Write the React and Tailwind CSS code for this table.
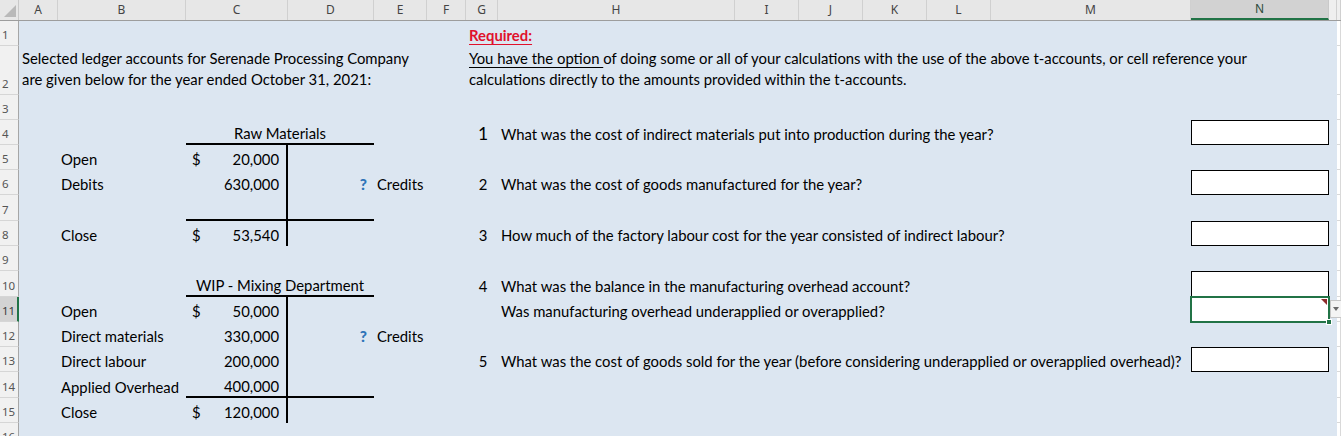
import React from "react";

const GRID =
  "grid grid-cols-[19px_39px_128px_102px_86px_53px_39px_32px_237px_64px_64px_64px_64px_200px_138px_8px_1fr]";

const COLS = ["A", "B", "C", "D", "E", "F", "G", "H", "I", "J", "K", "L", "M", "N", "O", "P"];

const Amount = ({ dollar, v }) => (
  <div className="flex w-full justify-between pl-[6px] pr-[7px]">
    <span>{dollar ? "$" : ""}</span>
    <span>{v}</span>
  </div>
);

const Num = ({ n, big }) => (
  <div className={`w-full pl-[2px] text-center ${big ? "text-[17.5px] leading-[19px]" : ""}`}>{n}</div>
);

const Box = () => <div className="absolute inset-0 border border-black bg-white" />;

const SelectedBox = () => (
  <>
    <div className="absolute inset-0 border border-black bg-white" />
    <div className="absolute -inset-[1px] z-10 border-2 border-[#217346]" />
    <svg className="absolute right-[2px] top-[2px] z-10" width="6" height="6" viewBox="0 0 6 6">
      <polygon points="0,0 6,0 6,6" fill="#8e2b2b" />
    </svg>
    <div className="absolute -bottom-[3px] -right-[3px] z-20 h-[6px] w-[6px] border border-white bg-[#217346]" />
    <div className="absolute left-[calc(100%+1px)] top-[3px] z-20 flex h-[18px] w-[12px] items-center justify-center border border-[#c6c6c6] bg-[#f4f4f4]">
      <svg width="6" height="4" viewBox="0 0 6 4">
        <polygon points="0,0 6,0 3,4" fill="#6a6a6a" />
      </svg>
    </div>
  </>
);

const Credits = {
  v: <div className="w-full pr-[7px] text-right text-[15.5px] font-black text-[#2e74b8]">?</div>,
};

function Row({ h, n, sel, cells = {} }) {
  const out = [];
  for (let i = 0; i < COLS.length; i++) {
    const key = COLS[i];
    const c = cells[key] || {};
    if (key === "P") {
      out.push(<div key={key} className="border-b border-r border-[#d9d9d9] bg-white" />);
      continue;
    }
    out.push(
      <div
        key={key}
        className={`relative flex min-w-0 items-end whitespace-nowrap ${c.cls || "pb-[2px]"} ${c.span || ""}`}
      >
        {c.v}
      </div>
    );
    if (c.skip) i += c.skip;
  }
  return (
    <div className={`${GRID} ${h} bg-[#dce6f1]`}>
      <div
        className={`flex items-end pb-[3px] pl-[2px] text-[11.5px] leading-[14px] ${
          sel
            ? "border-r-2 border-r-[#217346] bg-[#d3d3d3] text-[#3a3a3a]"
            : "border-r border-r-[#a6a6a6] bg-[#f1f1f1] text-[#555]"
        } border-b border-b-[#d6d6d6] font-['Noto_Sans',sans-serif]`}
      >
        {n}
      </div>
      {out}
    </div>
  );
}

function Header() {
  const letters = ["A", "B", "C", "D", "E", "F", "G", "H", "I", "J", "K", "L", "M", "N", "O", ""];
  return (
    <div className={`${GRID} h-[21px] border-b border-[#9d9d9d] bg-[#e7e7e7] font-['Noto_Sans',sans-serif] text-[12px] text-[#444]`}>
      <div className="relative border-r border-[#c9c9c9]">
        <svg className="absolute left-[4px] top-[5px]" width="12" height="12" viewBox="0 0 12 12">
          <polygon points="12,0 12,12 0,12" fill="#b9b9b9" />
        </svg>
      </div>
      {letters.map((l, i) =>
        l === "N" ? (
          <div key={i} className="flex items-center justify-center border-b-2 border-r border-b-[#217346] border-r-[#c9c9c9] bg-[#d2d2d2] text-[#2e4a3a]">
            {l}
          </div>
        ) : (
          <div key={i} className={`flex items-center justify-center border-r border-[#d0d0d0] ${l === "" || l === "O" ? "bg-[#efefef]" : ""}`}>
            {l === "O" ? "" : l}
          </div>
        )
      )}
    </div>
  );
}

export default function App() {
  return (
    <div className="h-[436px] w-[1341px] overflow-hidden bg-white font-['Lato',sans-serif] text-[14.85px] leading-[18px] text-black">
      <Header />
      <Row
        h="h-[25px]"
        n="1"
        cells={{
          G: { v: <span className="pl-[3px] font-bold text-[#e0112b] underline underline-offset-[3px]">Required:</span> },
        }}
      />
      <Row
        h="h-[49px]"
        n="2"
        cells={{
          A: {
            cls: "items-start pt-[2px] leading-[21px]",
            v: (
              <div className="pl-[3px]">
                Selected ledger accounts for Serenade Processing Company
                <br />
                are given below for the year ended October 31, 2021:
              </div>
            ),
          },
          G: {
            cls: "items-start pt-[2px] leading-[21px]",
            v: (
              <div className="pl-[3px]">
                <span className="underline underline-offset-[3px]">You have the option </span>of doing some or all of
                your calculations with the use of the above t-accounts, or cell reference your
                <br />
                calculations directly to the amounts provided within the t-accounts.
              </div>
            ),
          },
        }}
      />
      <Row h="h-[25px]" n="3" />
      <Row
        h="h-[25px]"
        n="4"
        cells={{
          C: { span: "col-span-2", skip: 1, cls: "pb-[1px] justify-center border-b-2 border-black", v: "Raw Materials" },
          G: { v: <Num n="1" big /> },
          H: { v: <span className="pl-[3px]">What was the cost of indirect materials put into production during the year?</span> },
          N: { v: <Box /> },
        }}
      />
      <Row
        h="h-[25px]"
        n="5"
        cells={{
          B: { v: <span className="pl-[3px]">Open</span> },
          C: { cls: "pb-[2px] border-r-2 border-black", v: <Amount dollar v="20,000" /> },
        }}
      />
      <Row
        h="h-[25px]"
        n="6"
        cells={{
          B: { v: <span className="pl-[3px]">Debits</span> },
          C: { cls: "pb-[2px] border-r-2 border-black", v: <Amount v="630,000" /> },
          D: Credits,
          E: { v: <span className="pl-[3px]">Credits</span> },
          G: { v: <Num n="2" /> },
          H: { v: <span className="pl-[3px]">What was the cost of goods manufactured for the year?</span> },
          N: { v: <Box /> },
        }}
      />
      <Row
        h="h-[26px]"
        n="7"
        cells={{
          C: { cls: "border-r-2 border-b-2 border-black" },
          D: { cls: "border-b-2 border-black" },
        }}
      />
      <Row
        h="h-[25px]"
        n="8"
        cells={{
          B: { v: <span className="pl-[3px]">Close</span> },
          C: { cls: "pb-[2px] border-r-2 border-black", v: <Amount dollar v="53,540" /> },
          G: { v: <Num n="3" /> },
          H: { v: <span className="pl-[3px]">How much of the factory labour cost for the year consisted of indirect labour?</span> },
          N: { v: <Box /> },
        }}
      />
      <Row h="h-[25px]" n="9" />
      <Row
        h="h-[26px]"
        n="10"
        cells={{
          C: { span: "col-span-2", skip: 1, cls: "pb-[1px] justify-center border-b-2 border-black", v: "WIP - Mixing Department" },
          G: { v: <Num n="4" /> },
          H: { v: <span className="pl-[3px]">What was the balance in the manufacturing overhead account?</span> },
          N: { v: <Box /> },
        }}
      />
      <Row
        h="h-[25px]"
        n="11"
        sel
        cells={{
          B: { v: <span className="pl-[3px]">Open</span> },
          C: { cls: "pb-[2px] border-r-2 border-black", v: <Amount dollar v="50,000" /> },
          H: { v: <span className="pl-[3px]">Was manufacturing overhead underapplied or overapplied?</span> },
          N: { v: <SelectedBox /> },
        }}
      />
      <Row
        h="h-[25px]"
        n="12"
        cells={{
          B: { v: <span className="pl-[3px]">Direct materials</span> },
          C: { cls: "pb-[2px] border-r-2 border-black", v: <Amount v="330,000" /> },
          D: Credits,
          E: { v: <span className="pl-[3px]">Credits</span> },
        }}
      />
      <Row
        h="h-[25px]"
        n="13"
        cells={{
          B: { v: <span className="pl-[3px]">Direct labour</span> },
          C: { cls: "pb-[2px] border-r-2 border-black", v: <Amount v="200,000" /> },
          G: { v: <Num n="5" /> },
          H: {
            v: (
              <span className="pl-[3px]">
                What was the cost of goods sold for the year (before considering underapplied or overapplied overhead)?
              </span>
            ),
          },
          N: { v: <Box /> },
        }}
      />
      <Row
        h="h-[26px]"
        n="14"
        cells={{
          B: { v: <span className="pl-[3px]">Applied Overhead</span> },
          C: { cls: "pb-[1px] border-r-2 border-b-2 border-black", v: <Amount v="400,000" /> },
          D: { cls: "border-b-2 border-black" },
        }}
      />
      <Row
        h="h-[25px]"
        n="15"
        cells={{
          B: { v: <span className="pl-[3px]">Close</span> },
          C: { cls: "pb-[2px] border-r-2 border-black", v: <Amount dollar v="120,000" /> },
        }}
      />
      <Row h="h-[25px]" n="16" />
    </div>
  );
}
